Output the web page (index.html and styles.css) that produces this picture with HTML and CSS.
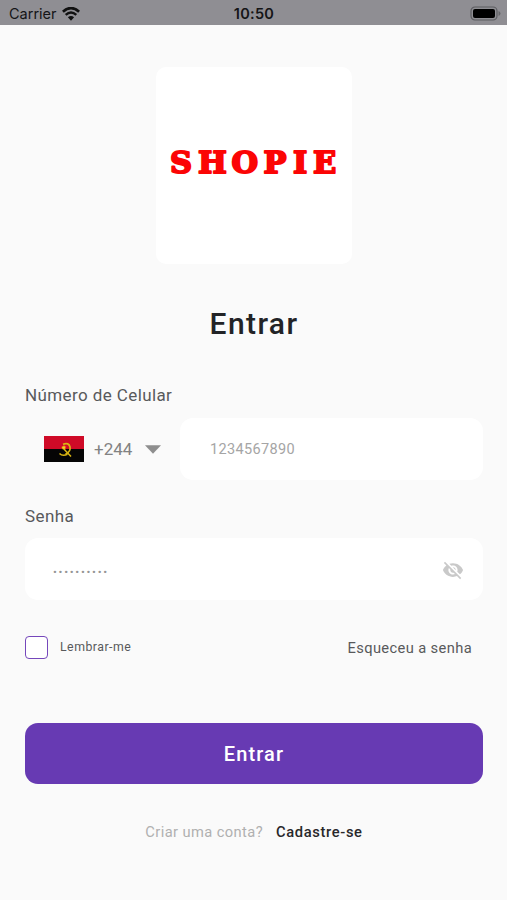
FILE: index.html
```html
<!DOCTYPE html>
<html lang="pt">
<head>
<meta charset="utf-8">
<meta name="viewport" content="width=device-width, initial-scale=1">
<title>Entrar</title>
<link rel="stylesheet" href="styles.css">
</head>
<body>
<header class="status">
  <div class="carrier"><span>Carrier</span>
    <svg class="wifi" viewBox="0 0 18 14" width="18" height="14"><path d="M.9 4.800Q9-2.600 17.100 4.800" fill="none" stroke="#111" stroke-width="2.700"/><path d="M3.700 7.900Q9 3.200 14.300 7.900" fill="none" stroke="#111" stroke-width="2.500"/><path d="M5.900 10.300Q9 7.700 12.100 10.300L9 13.700Z" fill="#111"/></svg>
  </div>
  <time class="clock">10:50</time>
  <svg class="battery" viewBox="0 0 31 15" width="31" height="15"><rect x="1" y="1" width="26" height="13" rx="4" fill="none" stroke="#5c5c60" stroke-width="1.200"/><rect x="3" y="3" width="22" height="9" rx="2" fill="#000"/><path d="M28.500 5v5q2-.8 2-2.500t-2-2.500" fill="#66666a"/></svg>
</header>
<main class="page">
  <div class="logo">
    <svg viewBox="0 0 196 197" width="196" height="197"><text class="brand" y="106" x="14 42 75.500 107.500 137 157">SHOPIE</text></svg>
  </div>
  <h1 class="title">Entrar</h1>
  <form class="form">
    <label class="label" for="phone">Número de Celular</label>
    <div class="phone-row">
      <div class="country">
        <svg class="flag" viewBox="0 0 40 26" width="40" height="26"><path fill="#cf0a27" d="M0 0h40v13H0z"/><path fill="#050505" d="M0 13h40v13H0z"/><g fill="none" stroke="#d9b512"><path d="M19 8.200q6-2 7 2.800t-4.500 7" stroke-width="1.700"/><path d="M18 11l9 9.500M15.500 17.500q3 3 8 .8" stroke-width="1.500"/></g><path fill="#f5d51c" d="M20 9l.7 1.600 1.700.1-1.300 1.100.4 1.700-1.500-.9-1.500.9.4-1.700-1.300-1.100 1.700-.1z"/></svg>
        <span class="code">+244</span>
        <svg class="caret" viewBox="0 0 16 9" width="16" height="9"><path d="M0 .3h16L8 8.700z" fill="#8e8e8e"/></svg>
      </div>
      <div class="field phone"><input id="phone" class="input" type="tel" placeholder="1234567890"></div>
    </div>
    <label class="label second" for="password">Senha</label>
    <div class="field password">
      <input id="password" class="input dots" type="text" placeholder="••••••••••">
      <svg class="eye" viewBox="0 0 24 24" width="22" height="22"><path fill="#c9c9c9" d="M12 7c2.760 0 5 2.240 5 5 0 .65-.13 1.260-.36 1.830l2.920 2.920c1.510-1.260 2.700-2.890 3.430-4.750-1.730-4.390-6-7.500-11-7.500-1.400 0-2.740.25-3.980.7l2.160 2.160C10.740 7.130 11.350 7 12 7zM2 4.270l2.280 2.280.46.46C3.080 8.300 1.780 10.020 1 12c1.730 4.390 6 7.500 11 7.500 1.550 0 3.030-.3 4.380-.84l.42.42L19.730 22 21 20.730 3.270 3 2 4.270zM7.530 9.800l1.550 1.550c-.05.21-.08.43-.08.65 0 1.660 1.340 3 3 3 .22 0 .44-.03.65-.08l1.550 1.550c-.67.33-1.410.53-2.200.53-2.760 0-5-2.240-5-5 0-.79.2-1.530.53-2.200zm4.310-.78l3.150 3.150.02-.16c0-1.660-1.340-3-3-3l-.17.01z"/></svg>
    </div>
    <div class="options">
      <label class="remember"><input class="check" type="checkbox"><span>Lembrar-me</span></label>
      <a class="forgot">Esqueceu a senha</a>
    </div>
    <button class="submit" type="button">Entrar</button>
  </form>
  <p class="signup"><span class="ask">Criar uma conta?</span><a class="join">Cadastre-se</a></p>
</main>
</body>
</html>
```
FILE: styles.css
```css
* { box-sizing: border-box; }
body { margin: 0; min-height: 900px; background: #fafafa; color: #58595b; font-family: Roboto, "Liberation Sans", sans-serif; }
svg { display: block; flex: none; }
.status { height: 25px; padding: 2px 6px 0 9px; background: #8f8e93; display: grid; grid-template-columns: 1fr auto 1fr; align-items: center; color: #151517; font: 14.500px/20px Inter, sans-serif; }
.carrier { display: flex; align-items: center; gap: 5px; }
.clock { font-weight: 600; letter-spacing: .3px; margin-right: 2px; }
.battery { justify-self: end; }
.page { padding: 42px 24px 0 25px; }
.logo { width: 196px; height: 197px; margin: 0 auto; border-radius: 10px; background: #fff; }
.brand { font: bold 30.500px "DejaVu Serif", serif; fill: #fb0505; stroke: #fb0505; stroke-width: 2px; stroke-linejoin: round; }
.title { margin: 40px 0 0; text-align: center; font-size: 30px; line-height: 40px; font-weight: 500; letter-spacing: 1.400px; color: #222326; }
.form { margin-top: 39px; }
.label { display: block; height: 24px; line-height: 24px; font-size: 17px; letter-spacing: .4px; }
.phone-row { display: flex; margin-top: 11px; }
.country { width: 155px; padding-left: 19px; display: flex; align-items: center; }
.code { width: 39px; margin: 0 12px 0 10px; font-size: 17px; color: #828282; }
.field { height: 62px; border-radius: 13px; background: #fff; display: flex; align-items: center; }
.phone { flex: 1; padding: 2px 30px 0; }
.input { width: 100%; min-width: 0; border: 0; padding: 0; outline: 0; background: none; font: 14.500px/20px Roboto, sans-serif; letter-spacing: .35px; }
.input::placeholder { color: #a5a5a5; opacity: 1; }
.second { margin-top: 24px; }
.password { margin-top: 10px; padding: 2px 19px 0 28px; }
.dots { height: 20px; padding-top: 4px; font-size: 11.500px; letter-spacing: 1.700px; }
.dots::placeholder { color: #959595; }
.options { height: 24px; margin-top: 35px; padding-right: 11px; display: flex; justify-content: space-between; align-items: center; }
.remember { display: flex; align-items: center; gap: 12px; font-size: 12.300px; letter-spacing: .5px; }
.check { appearance: none; width: 23px; height: 23px; margin: 0; border: 1.500px solid #7547bb; border-radius: 4px; background: #fff; }
.forgot { font-size: 14.700px; letter-spacing: .37px; padding-top: 1px; }
.submit { display: block; width: 100%; height: 61px; margin-top: 64px; padding: 0; border: 0; border-radius: 13px; background: #673ab3; color: #fff; font: 500 20px/24px Roboto, sans-serif; letter-spacing: 1.100px; }
.signup { display: flex; justify-content: center; gap: 13px; margin: 38px 0 0; font-size: 14.700px; line-height: 20px; }
.ask { color: #b0b0b0; letter-spacing: .4px; }
.join { color: #28282a; font-weight: 500; letter-spacing: .65px; }
```
